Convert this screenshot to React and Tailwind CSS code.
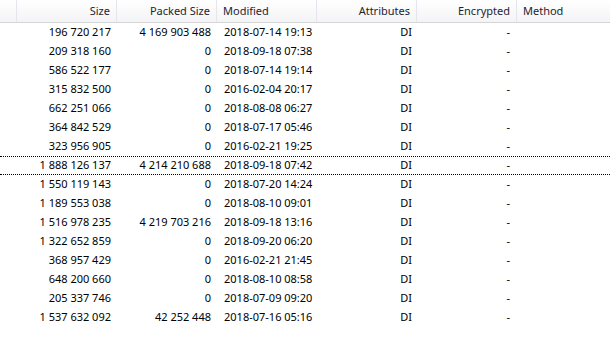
import React from 'react';

const rows = [
  ['196 720 217', '4 169 903 488', '2018-07-14 19:13'],
  ['209 318 160', '0', '2018-09-18 07:38'],
  ['586 522 177', '0', '2018-07-14 19:14'],
  ['315 832 500', '0', '2016-02-04 20:17'],
  ['662 251 066', '0', '2018-08-08 06:27'],
  ['364 842 529', '0', '2018-07-17 05:46'],
  ['323 956 905', '0', '2016-02-21 19:25'],
  ['1 888 126 137', '4 214 210 688', '2018-09-18 07:42'],
  ['1 550 119 143', '0', '2018-07-20 14:24'],
  ['1 189 553 038', '0', '2018-08-10 09:01'],
  ['1 516 978 235', '4 219 703 216', '2018-09-18 13:16'],
  ['1 322 652 859', '0', '2018-09-20 06:20'],
  ['368 957 429', '0', '2016-02-21 21:45'],
  ['648 200 660', '0', '2018-08-10 08:58'],
  ['205 337 746', '0', '2018-07-09 09:20'],
  ['1 537 632 092', '42 252 448', '2018-07-16 05:16'],
];

function HeaderCell({ children, right, last }) {
  return (
    <div
      className={`h-full flex items-center px-[6px] ${right ? 'justify-end' : 'justify-start'} ${
        last ? 'flex-1' : 'w-[100px] border-r border-[#e3e6ea]'
      }`}
    >
      {children}
    </div>
  );
}

function App() {
  return (
    <div
      className="w-[610px] h-[337px] bg-white overflow-hidden text-[11px] text-black"
      style={{ fontFamily: '"Noto Sans", "Liberation Sans", sans-serif' }}
    >
      <div className="h-[23px] flex border-b border-[#d5d5d5] bg-gradient-to-b from-white to-[#f3f4f6] text-[#1e2430]">
        <div className="w-[17px] h-full border-r border-[#e3e6ea]" />
        <HeaderCell right>Size</HeaderCell>
        <HeaderCell right>Packed Size</HeaderCell>
        <HeaderCell>Modified</HeaderCell>
        <HeaderCell right>Attributes</HeaderCell>
        <HeaderCell right>Encrypted</HeaderCell>
        <HeaderCell last>Method</HeaderCell>
      </div>
      {rows.map((r, i) => (
        <div
          key={i}
          className={`h-[19px] flex items-center ${i === 7 ? 'border-y border-dotted border-black' : ''}`}
        >
          <div className="w-[17px]" />
          <div className="w-[101px] text-right pr-[7px]">{r[0]}</div>
          <div className="w-[100px] text-right pr-[7px]">{r[1]}</div>
          <div className="w-[100px] pl-[6px]">{r[2]}</div>
          <div className="w-[100px] text-right pr-[6px]">DI</div>
          <div className="w-[100px] text-right pr-[8px]">-</div>
          <div className="flex-1" />
        </div>
      ))}
    </div>
  );
}

export default App;
